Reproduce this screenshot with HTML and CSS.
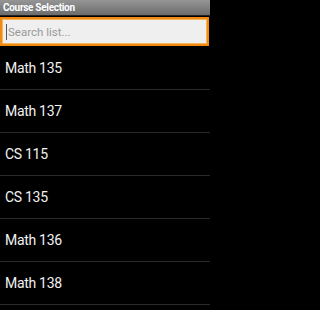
FILE: index.html
```html
<!DOCTYPE html>
<html>
<head>
<meta charset="utf-8">
<link rel="stylesheet" href="styles.css">
</head>
<body>
<div class="titlebar">Course Selection</div>
<div class="searchwrap">
  <div class="search"><span class="cursor"></span><span class="ph">Search list...</span></div>
</div>
<ul class="list">
  <li>Math 135</li>
  <li>Math 137</li>
  <li>CS 115</li>
  <li>CS 135</li>
  <li>Math 136</li>
  <li>Math 138</li>
</ul>
</body>
</html>
```
FILE: styles.css
```css
html, body {
  margin: 0;
  padding: 0;
  background: #000;
  height: 310px;
  overflow: hidden;
  font-family: Roboto, "Liberation Sans", sans-serif;
}
body {
  width: 210px;
}
.titlebar {
  height: 15px;
  background: linear-gradient(#959595, #6c6c6c);
  color: #fff;
  font-weight: bold;
  font-size: 10px;
  letter-spacing: -0.3px;
  line-height: 15px;
  padding-left: 3px;
  border-bottom: 1px solid #222;
}
.searchwrap {
  padding: 1px 1px 1px 0;
}
.search {
  height: 25px;
  border: 2px solid #f08a10;
  box-shadow: inset 0 0 0 1px #f7b45a;
  background: #efefef;
  display: flex;
  align-items: center;
  padding-left: 4px;
}
.cursor {
  width: 1px;
  height: 16px;
  background: #555;
  margin-right: 1px;
}
.ph {
  color: #9a9a9a;
  font-size: 11.5px;
}
.list {
  list-style: none;
  margin: 0;
  padding: 0;
}
.list li {
  height: 42px;
  border-bottom: 1px solid #2a2a2a;
  color: #f2f2f2;
  font-size: 14px;
  letter-spacing: -0.3px;
  display: flex;
  align-items: center;
  padding-left: 5px;
}
```
